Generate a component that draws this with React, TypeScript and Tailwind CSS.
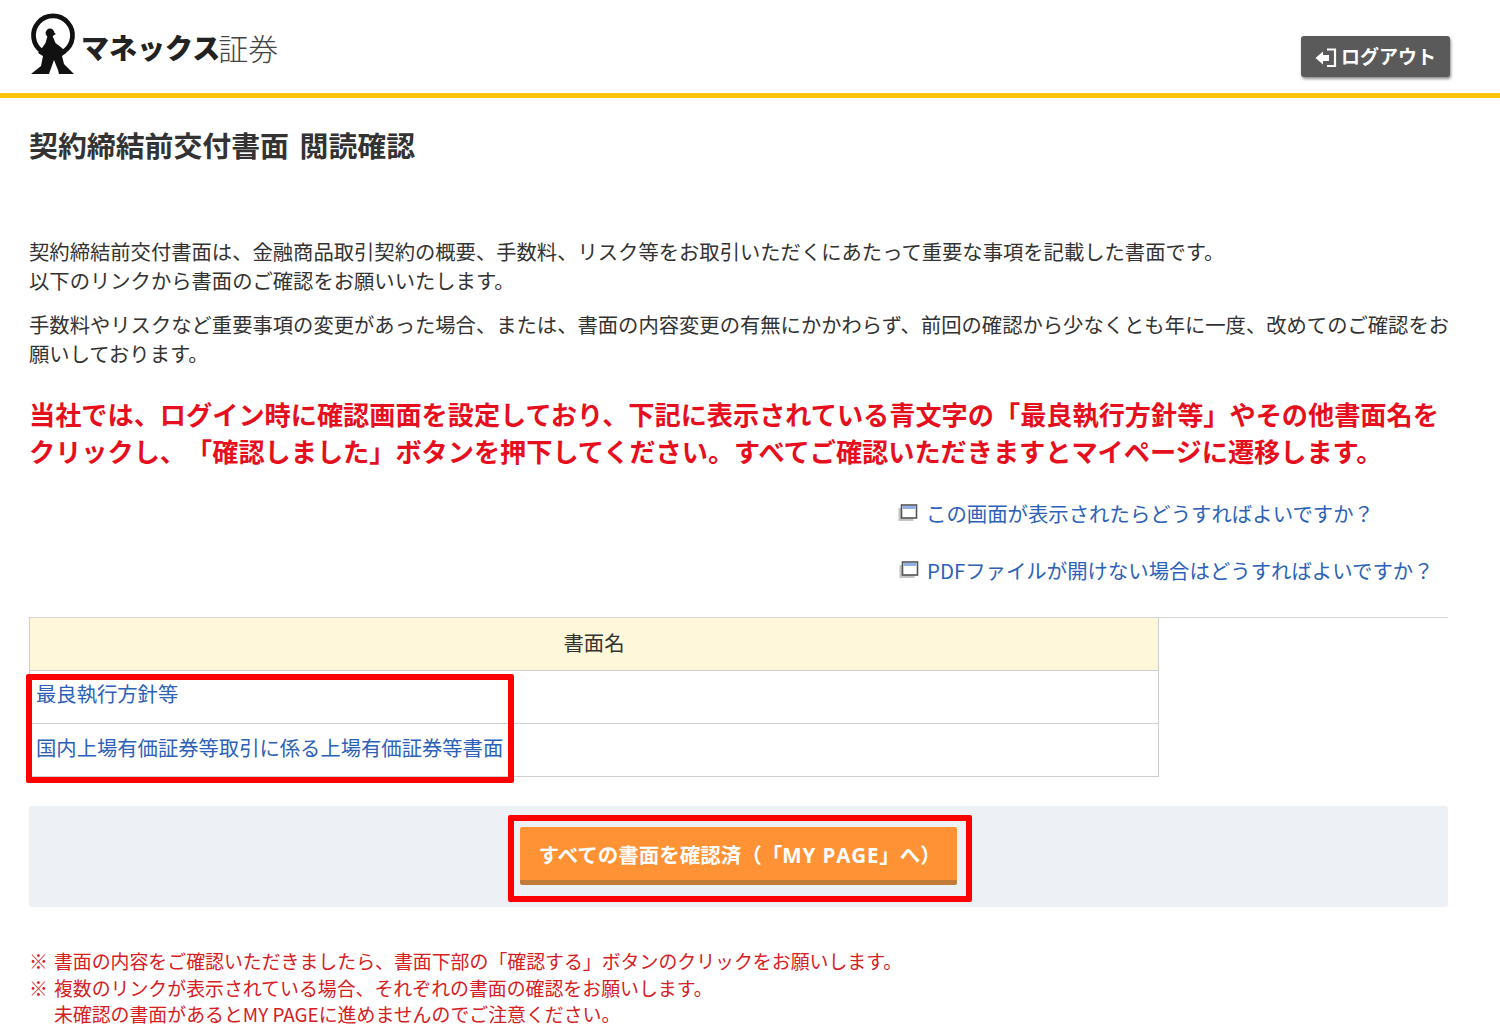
const cjk = "font-['Noto_Sans_CJK_JP','Noto_Sans',sans-serif]";

function Logo() {
  return (
    <svg width="50" height="64" viewBox="0 0 50 64" className="shrink-0">
      <path d="M13 39.5 A19.5 19.5 0 1 1 35 39.5" fill="none" stroke="#111" strokeWidth="4.8" />
      <circle cx="21" cy="21" r="4.4" fill="#111" />
      <path d="M24 20 L27 22 L24 23.5 Z" fill="#111" />
      <path d="M18.5 24 L23.5 24 L26.5 31 L33 36 L37 41 L33 44 L35 52 L45 62 L30 62 L29 58 L25 48 L20 62 L2 62 L12 54 L14 44 L9 41 L13 36 L16.5 31 Z" fill="#111" />
    </svg>
  );
}

function LogoutIcon() {
  return (
    <svg width="22" height="20" viewBox="0 0 22 20" className="shrink-0">
      <path d="M0.5 11 L8 4.5 V8 H14 V14 H8 V17.5 Z" fill="#fff" />
      <path d="M12 2.5 H20 V19 H12" fill="none" stroke="#fff" strokeWidth="2.2" />
    </svg>
  );
}

function WindowIcon() {
  return (
    <svg width="20" height="18" viewBox="0 0 20 18" className="shrink-0">
      <rect x="0.5" y="4" width="15" height="13" fill="#c4c4c4" />
      <rect x="3.5" y="1" width="15" height="13" fill="#fff" stroke="#555" strokeWidth="1.6" />
      <rect x="4.5" y="2" width="13" height="3" fill="#8fb0e6" />
    </svg>
  );
}

function HelpLink({ text, className }: { text: string; className: string }) {
  return (
    <a className={`flex items-center gap-[8px] text-[20.4px] leading-[30px] text-[#2b62b8] ${className}`}>
      <WindowIcon />
      {text}
    </a>
  );
}

export default function App() {
  return (
    <div className={`relative h-[1032px] overflow-hidden bg-white text-[#333] [text-spacing-trim:space-all] ${cjk}`}>
      <header className="flex h-[98px] items-start justify-between border-b-[5px] border-[#fcc30b] pl-[29px] pr-[50px]">
        <div className="flex items-center pt-[12px]">
          <Logo />
          <span className="ml-[2px] mt-[6px] text-[28px] font-black leading-none text-[#222]">マネックス</span>
          <span className="ml-[-2px] mt-[6px] text-[30px] font-light leading-none text-[#444]">証券</span>
        </div>
        <button className="mt-[36px] flex h-[41px] w-[149px] items-center justify-center gap-[4px] rounded-[3px] bg-[#5a5a5a] text-[19px] font-bold text-white shadow-[1px_2px_3px_rgba(0,0,0,0.45)]">
          <LogoutIcon />
          ログアウト
        </button>
      </header>

      <main className="px-[29px]">
        <h1 className="mt-[26px] text-[28.9px] font-bold leading-[40px] text-[#333] [word-spacing:4px]">契約締結前交付書面 閲読確認</h1>

        <p className="mt-[73px] text-[20.32px] leading-[28.5px]">
          契約締結前交付書面は、金融商品取引契約の概要、手数料、リスク等をお取引いただくにあたって重要な事項を記載した書面です。
          <br />
          以下のリンクから書面のご確認をお願いいたします。
        </p>
        <p className="mt-[16px] w-[1425px] text-[20.32px] leading-[28.5px]">
          手数料やリスクなど重要事項の変更があった場合、または、書面の内容変更の有無にかかわらず、前回の確認から少なくとも年に一度、改めてのご確認をお願いしております。
        </p>

        <p className="mt-[29px] w-[1425px] text-[26.18px] font-bold leading-[37px] text-[#e60f1e]">
          当社では、ログイン時に確認画面を設定しており、下記に表示されている青文字の「最良執行方針等」やその他書面名をクリックし、「確認しました」ボタンを押下してください。すべてご確認いただきますとマイページに遷移します。
        </p>

        <div className="mt-[28px] flex flex-col gap-[27px] pl-[869px]">
          <HelpLink text="この画面が表示されたらどうすればよいですか？" className="" />
          <HelpLink text="PDFファイルが開けない場合はどうすればよいですか？" className="pl-[1px]" />
        </div>

        <div className="mt-[32px] h-[160px] w-[1419px] border-t border-[#d5d5d5]">
          <table className="w-[1130px] border-collapse text-[20.32px]">
            <thead>
              <tr>
                <th className="h-[52px] border border-t-0 border-[#cfcfcf] bg-[#fff7d9] pb-[4px] font-normal">書面名</th>
              </tr>
            </thead>
            <tbody>
              <tr>
                <td className="h-[53px] border border-[#cfcfcf] px-[6px] pb-[7px] text-[#2b62b8]">最良執行方針等</td>
              </tr>
              <tr>
                <td className="h-[53px] border border-[#cfcfcf] px-[6px] pb-[5px] text-[#2b62b8]">国内上場有価証券等取引に係る上場有価証券等書面</td>
              </tr>
            </tbody>
          </table>
        </div>

        <div className="mt-[29px] flex h-[101px] w-[1419px] items-center justify-center rounded-[3px] bg-[#edf1f6]">
          <button className="mb-[1px] mr-[1px] h-[58px] w-[437px] rounded-[2px] border-b-[5px] border-[#c27c3a] bg-[#fe9234] pl-[19px] pt-[2px] text-left text-[20.5px] font-bold text-white">
            すべての書面を確認済（「<span className="font-['Open_Sans',sans-serif] tracking-[0.9px]">MY PAGE</span>」へ）
          </button>
        </div>

        <ul className="mt-[41px] text-[18.9px] leading-[26.5px] text-[#d6201f]">
          <li className="flex gap-[6px]"><span>※</span><span>書面の内容をご確認いただきましたら、書面下部の「確認する」ボタンのクリックをお願いします。</span></li>
          <li className="flex gap-[6px]"><span>※</span><span>複数のリンクが表示されている場合、それぞれの書面の確認をお願いします。<br />未確認の書面があるとMY PAGEに進めませんのでご注意ください。</span></li>
        </ul>
      </main>

      {/* annotation frames drawn over the screenshot */}
      <div className="absolute left-[26px] top-[674px] h-[109px] w-[488px] rounded-[2px] border-[6px] border-[#ff0000]" />
      <div className="absolute left-[508px] top-[815px] h-[87px] w-[464px] rounded-[2px] border-[6px] border-[#ff0000]" />
    </div>
  );
}
